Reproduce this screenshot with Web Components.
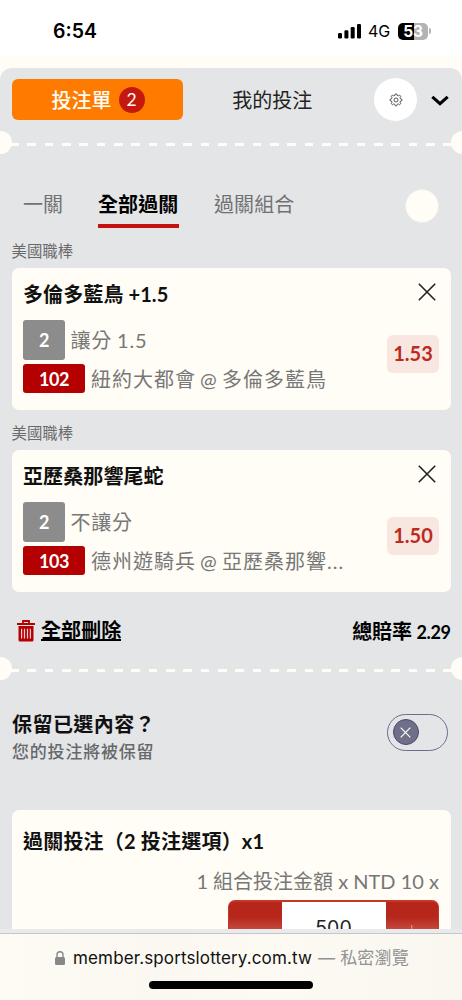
<!DOCTYPE html>
<html lang="zh-Hant">
<head>
<meta charset="utf-8">
<title>投注單</title>
<style>
html,body{margin:0;height:100%}
body{background:#fffdf5;font-family:Lato,"Noto Sans CJK TC",sans-serif;color:#111;overflow:hidden}
</style>
</head>
<body>
<bet-app></bet-app>
<script>
const define=(name,css,html)=>customElements.define(name,class extends HTMLElement{
  constructor(){
    super();
    this.attachShadow({mode:'open'}).innerHTML=`<style>*{box-sizing:border-box}:host{display:block;box-sizing:border-box;white-space:nowrap}${css}</style>${html}`;
  }
});

define('status-bar',`
:host{display:flex;height:56px;background:#fff;align-items:center;padding:6px 31px 0 53px;font:600 19.5px/24px Inter,sans-serif;color:#000}
.time{flex:1}
.net{font-size:16px;font-weight:400;margin:0 7px 0 6px;width:23px;letter-spacing:-.2px}
svg{display:block}
.bat{width:30px;height:17px;border-radius:5px;background:linear-gradient(90deg,#000 53%,#b3b3b3 53%);color:#fff;font-size:15.5px;font-weight:700;line-height:17px;text-align:center;letter-spacing:-.3px}
.cap{width:2px;height:6px;border-radius:0 2px 2px 0;background:#b3b3b3;margin-left:1px}`,
`<span class="time">6:54</span>
<svg width="24" height="16" viewBox="0 0 24 16"><rect x="0" y="10" width="4" height="5.5" rx="1.2"/><rect x="6.4" y="7.3" width="4" height="8.2" rx="1.2"/><rect x="12.7" y="4" width="4" height="11.5" rx="1.2"/><rect x="19" y="1" width="4" height="14.5" rx="1.2"/></svg>
<span class="net">4G</span><span class="bat">53</span><span class="cap"></span>`);

define('slip-header',`
:host{display:flex;height:62px;padding:10px 13px 0 11.5px;align-items:flex-start}
.on{margin-top:1px;width:171px;height:41px;border-radius:6px;background:#ff7b00;color:#fffdf5;display:flex;align-items:center;justify-content:center;gap:7px;font-size:20px;font-weight:500;padding-left:2px}
.n{width:26px;height:26px;border-radius:50%;background:#c5190f;font-size:17.5px;line-height:26px;text-align:center;font-weight:400}
.mine{width:191.5px;text-align:center;padding-right:12px;font-size:20px;line-height:44px;color:#222}
.gear{width:43px;height:43px;border-radius:50%;background:#fff;display:grid;place-items:center}
.down{margin:17px 0 0 14px}`,
`<div class="on"><span>投注單</span><span class="n">2</span></div><div class="mine">我的投注</div>
<div class="gear"><svg width="14" height="14" viewBox="0 0 14 14" fill="none" stroke="#444" stroke-width=".9" stroke-linejoin="round"><path d="M5.9 2.4L6.2 1h1.6l.3 1.4 1.2.5 1.3-.8 1.2 1.2-.8 1.3.5 1.2 1.4.3v1.6l-1.4.3-.5 1.2.8 1.3-1.2 1.2-1.3-.8-1.2.5-.3 1.4H6.2l-.3-1.4-1.2-.5-1.3.8-1.2-1.2.8-1.3-.5-1.2-1.4-.3V6.1l1.4-.3L3 4.6l-.8-1.3 1.2-1.2 1.3.8z"/><circle cx="7" cy="7" r="2"/></svg></div>
<svg class="down" width="18" height="12" viewBox="0 0 18 12" fill="none" stroke="#000" stroke-width="3"><path d="M1.3 1.8L9 8.7l7.7-6.9"/></svg>`);

define('ticket-divider',`
:host{display:flex;align-items:center;justify-content:space-between;height:23px;overflow:hidden;background:repeating-linear-gradient(90deg,#fffdf5 0 8.7px,transparent 8.7px 17.33px) -7.3px 12px/480px 3px no-repeat}
i{width:23px;height:23px;border-radius:50%;background:#fffdf5;margin:0 -11.5px}`,`<i></i><i></i>`);

define('slip-tabs',`
:host{display:flex;height:85px;padding:34px 23.5px 0 23px;align-items:flex-start;font-size:20px;color:#707173}
span{display:block;height:40px;line-height:32px;letter-spacing:.1px}
.a{width:75px}.b{width:81px;color:#000;font-weight:700;border-bottom:4px solid #c5120f;margin-right:35px}
i{width:34px;height:34px;border-radius:50%;background:#fffdf5;margin:.5px 0 0 auto;border:1px solid #eeeeeb}`,
`<span class="a">一關</span><span class="b">全部過關</span><span>過關組合</span><i></i>`);

define('bet-pick',`
:host{height:182.4px;padding:0 11.5px}
.league{font-size:15.4px;line-height:25px;height:29px;color:#6a6a6a}
.card{height:142px;border-radius:7px;background:#fffdf5;padding:11px 11.5px 0 11.5px;display:flex;justify-content:space-between}
.title{font-size:20px;line-height:31px;height:41px;font-weight:700;color:#111;letter-spacing:.1px}
.row{display:flex;align-items:center;gap:6px;font-size:20px;letter-spacing:1px;word-spacing:-2px;color:#777}
.market{margin:-2px 0 0 -.5px;letter-spacing:.8px;word-spacing:-1px}
.row+.row{margin-top:4px}
b{color:#fff;border-radius:3px;text-align:center;font-size:18px;letter-spacing:-.4px}
.g{width:42px;height:40px;line-height:40px;background:#8c8c8c}
.r{width:62px;height:29px;line-height:30px;background:#b40000}
.side{display:flex;flex-direction:column;align-items:flex-end}
.side svg{margin:4px 3.5px 34px 0}
.odds{width:52px;height:38px;border-radius:6px;background:#f8e7e0;color:#bd2a20;font-weight:700;font-size:20px;line-height:37px;text-align:center}`,
`<div class="league"><slot name="league"></slot></div>
<div class="card"><div><div class="title"><slot name="title"></slot></div>
<div class="row"><b class="g">2</b><span class="market"><slot name="market"></slot></span></div>
<div class="row"><b class="r"><slot name="code"></slot></b><slot name="match"></slot></div></div>
<div class="side"><svg width="18" height="18" viewBox="0 0 18 18" stroke="#222" stroke-width="1.6"><path d="M.8.8l16.4 16.4M17.2.8L.8 17.2"/></svg><div class="odds"><slot name="odds"></slot></div></div></div>`);

define('slip-total',`
:host{display:flex;height:53px;align-items:center;padding:1px 11.5px 0 17px;font-weight:700;color:#000;font-size:20px}
u{text-decoration:none;border-bottom:2px solid #000;line-height:20px;height:21px;margin:0 auto 0 6px;display:block;letter-spacing:.1px}
.t{word-spacing:-.5px}.t span{font-size:18px;letter-spacing:-.4px}`,
`<svg width="18" height="22" viewBox="0 0 18 22"><path d="M6 3.5V1h6v2.5M0 4h18" fill="none" stroke="#b80000" stroke-width="1.8"/><path d="M1.500 6h15v14a1.500 1.500 0 0 1-1.500 1.500H3A1.500 1.500 0 0 1 1.500 20z" fill="#b80000"/><path d="M4.600 8.800v9.700M7.500 8.800v9.700M10.500 8.800v9.700M13.400 8.800v9.700" stroke="#e9cfd0" stroke-width="1.200"/></svg>
<u>全部刪除</u><span class="t">總賠率 <span>2.29</span></span>`);

define('keep-picks',`
:host{display:flex;height:130px;justify-content:space-between;padding:28px 14px 0 12px}
.h{font-size:20px;line-height:32px;letter-spacing:.45px;font-weight:700;color:#111}
.s{font-size:17px;line-height:23px;letter-spacing:.8px;color:#67686a;font-weight:500}
.sw{margin-top:6px;width:61px;height:37.5px;border:1.3px solid #706b8d;border-radius:19px;padding:4.5px}
.k{width:26px;height:26px;border-radius:50%;background:#706f8a;border:1.5px solid #4d4872;display:grid;place-items:center}`,
`<div><div class="h">保留已選內容？</div><div class="s">您的投注將被保留</div></div>
<div class="sw"><div class="k"><svg width="11" height="11" viewBox="0 0 11 11" stroke="#fff" stroke-width="1.2"><path d="M.7.7l9.6 9.6M10.3.7L.7 10.3"/></svg></div></div>`);

define('stake-card',`
:host{height:119px;margin:0 11.5px;border-radius:7px 7px 0 0;background:#fffdf5;padding:15px 11.5px 0;overflow:hidden}
.h{font-size:20px;line-height:32px;font-weight:700;color:#111;letter-spacing:.2px}
.s{font-size:20px;line-height:31px;text-align:right;color:#777;margin-top:9px;height:34px}
.st{display:flex;width:211px;height:46px;margin-left:auto;border:1px solid #c5372b;border-top-width:2px;border-radius:7px;overflow:hidden;background:#b6261b;color:#e79c93;font:300 24px/53px Lato,sans-serif;text-align:center}
.st span{width:52.5px}.st .v{flex:1;background:#fff;color:#222;font:400 19.5px/53px Inter,sans-serif}
.st span:not(.v){background:linear-gradient(#b6261b 15px,#c85146 30px)}`,
`<div class="h">過關投注（2 投注選項）x1</div><div class="s">1 組合投注金額 x NTD 10 x</div>
<div class="st"><span>-</span><span class="v">500</span><span>+</span></div>`);

define('browser-bar',`
:host{height:71px;background:linear-gradient(90deg,#fdfbf4,#faf8f1 35%,#fcfaf3 60%,#f9f7f0);border-top:4px solid #e8eaec}
.u{border-top:1px solid #c5c6c7;height:48px;padding-left:2px;display:flex;justify-content:center;align-items:center;font:400 17px/24px Inter,"Noto Sans CJK TC",sans-serif;color:#111}
svg{margin:0 8px 0 0}.m{letter-spacing:.13px}.p{color:#929292;margin-left:6px;font-size:17px;letter-spacing:.2px}
.home{width:164px;height:8px;border-radius:4px;background:#000;margin:-.5px auto 0}`,
`<div class="u"><svg width="10" height="14" viewBox="0 0 10 14"><rect y="6" width="10" height="8" rx="1.5" fill="#888"/><path d="M2 7V3.8a3 3 0 0 1 6 0V7" fill="none" stroke="#888" stroke-width="1.4"/></svg><span class="m">member.sportslottery.com.tw</span><span class="p">— 私密瀏覽</span></div><div class="home"></div>`);

define('bet-app',`
:host{width:462px;height:1000px;overflow:hidden;background:#fffdf5}
main{margin-top:12px;height:861px;border-radius:12px 12px 0 0;background:#e4e5e7;overflow:hidden}
ticket-divider.one{margin-top:1px}`,
`<status-bar></status-bar><main><slip-header></slip-header><ticket-divider class="one"></ticket-divider><slip-tabs></slip-tabs>
<bet-pick><span slot="league">美國職棒</span><span slot="title">多倫多藍鳥 +1.5</span><span slot="market">讓分 1.5</span><span slot="code">102</span><span slot="match">紐約大都會 @ 多倫多藍鳥</span><span slot="odds">1.53</span></bet-pick>
<bet-pick><span slot="league">美國職棒</span><span slot="title">亞歷桑那響尾蛇</span><span slot="market">不讓分</span><span slot="code">103</span><span slot="match">德州遊騎兵 @ 亞歷桑那響...</span><span slot="odds">1.50</span></bet-pick>
<slip-total></slip-total><ticket-divider></ticket-divider><keep-picks></keep-picks><stake-card></stake-card></main><browser-bar></browser-bar>`);
</script>
</body>
</html>
